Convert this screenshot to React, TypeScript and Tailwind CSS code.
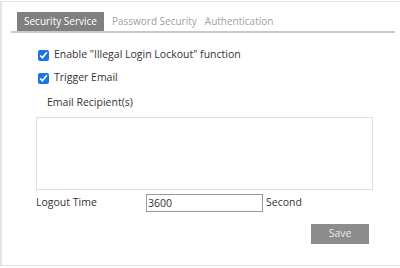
import { useState } from "react";

const TABS = ["Security Service", "Password Security", "Authentication"];

export default function App() {
  const [tab, setTab] = useState(0);
  const [lockout, setLockout] = useState(true);
  const [trigger, setTrigger] = useState(true);
  const [logout, setLogout] = useState("3600");

  return (
    <div
      className="h-[268px] w-[400px] overflow-hidden bg-white text-[10.5px] text-[#333]"
      style={{ fontFamily: '"Open Sans", "Noto Sans", sans-serif' }}
    >
      <div className="mt-[1px] h-[265px] border-l-2 border-t border-b border-[#e3e3e3] pt-[10px]">
        <div className="ml-[9px] mr-[5px] flex border-b-2 border-[#c8c8c8] pl-[6px] text-[10px]">
          {TABS.map((t, i) => (
            <button
              key={t}
              type="button"
              onClick={() => setTab(i)}
              className={
                i === tab
                  ? "h-[19px] bg-[#808080] px-[7px] leading-[19px] text-white"
                  : "h-[19px] px-[4px] leading-[19px] text-[#a0a0a0] first-of-type:ml-0 [&:nth-child(2)]:ml-[4px]"
              }
            >
              {t}
            </button>
          ))}
        </div>

        <div className="pl-[36px] pt-[15px]">
          <label className="flex h-[14px] items-center gap-[5px]">
            <input
              type="checkbox"
              checked={lockout}
              onChange={(e) => setLockout(e.target.checked)}
              className="m-0 h-[11px] w-[11px] accent-[#1a73e8]"
            />
            <span>Enable "Illegal Login Lockout" function</span>
          </label>
          <label className="mt-[9px] flex h-[14px] items-center gap-[5px]">
            <input
              type="checkbox"
              checked={trigger}
              onChange={(e) => setTrigger(e.target.checked)}
              className="m-0 h-[11px] w-[11px] accent-[#1a73e8]"
            />
            <span>Trigger Email</span>
          </label>
        </div>

        <div className="pl-[34px]">
          <p className="mt-[10px] pl-[11px] leading-[14px]">Email Recipient(s)</p>
          <textarea className="mt-[8px] block h-[73px] w-[337px] resize-none border border-[#e0e0e0] outline-none" />

          <div className="mt-[4px] flex h-[18px] items-center">
            <span className="w-[110px]">Logout Time</span>
            <input
              value={logout}
              onChange={(e) => setLogout(e.target.value)}
              className="h-[18px] w-[117px] border border-[#9a9a9a] px-[1px] text-[10.5px] outline-none"
            />
            <span className="ml-[3px]">Second</span>
          </div>

          <div className="mt-[12px] flex w-[333px] justify-end">
            <button
              type="button"
              className="h-[20px] w-[58px] bg-[#8c8c8c] text-[10.5px] text-[#e8e8e8]"
            >
              Save
            </button>
          </div>
        </div>
      </div>
    </div>
  );
}
